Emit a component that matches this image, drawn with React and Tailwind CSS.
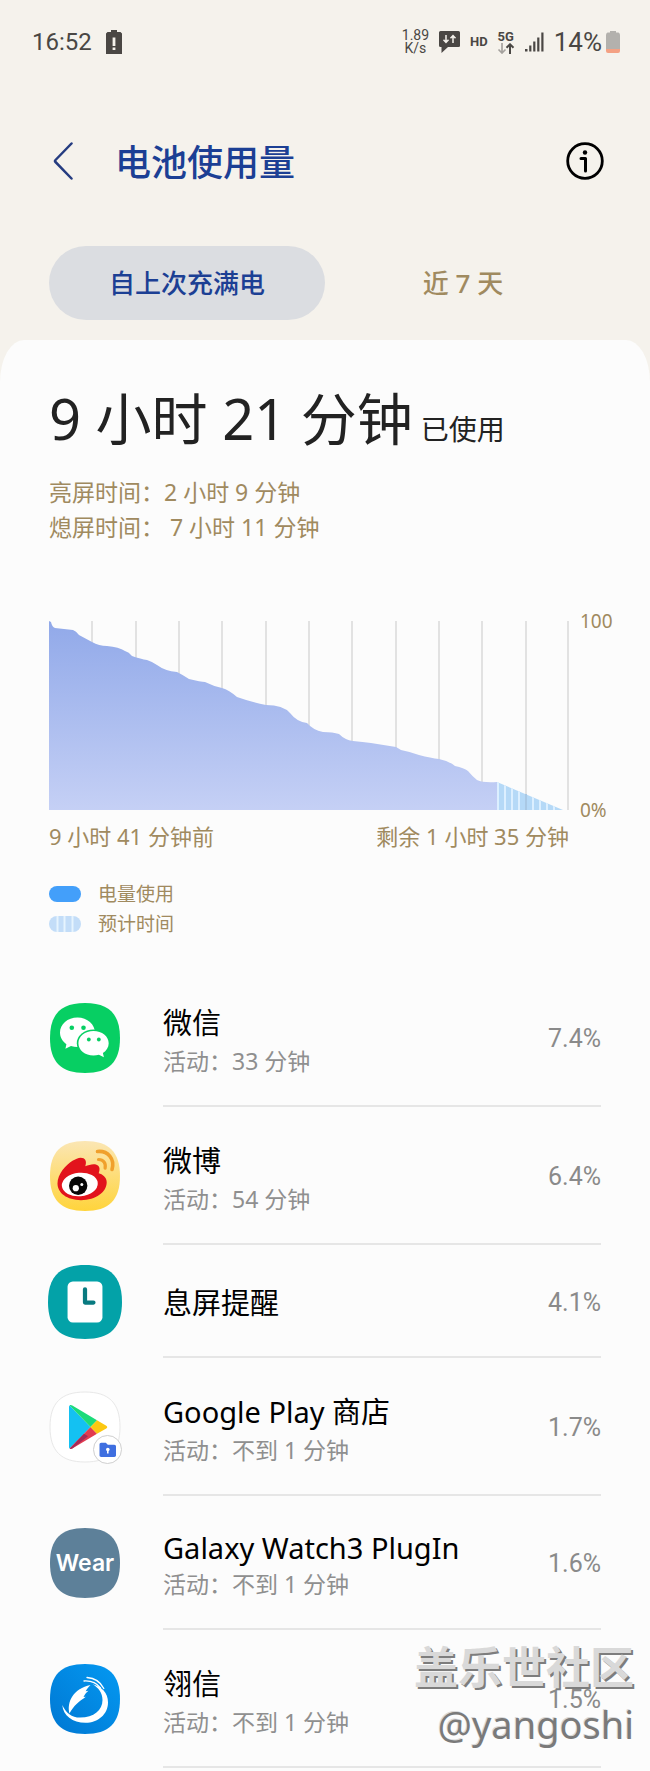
const usage = [
  { id: 'wechat', name: '微信', detail: '活动：33 分钟', percent: '7.4%' },
  { id: 'weibo', name: '微博', detail: '活动：54 分钟', percent: '6.4%' },
  { id: 'aod', name: '息屏提醒', percent: '4.1%' },
  { id: 'play', name: 'Google Play 商店', detail: '活动：不到 1 分钟', percent: '1.7%' },
  { id: 'wear', name: 'Galaxy Watch3 PlugIn', detail: '活动：不到 1 分钟', percent: '1.6%', latin: true },
  { id: 'lingxin', name: '翎信', detail: '活动：不到 1 分钟', percent: '1.5%' },
];

const SQUIRCLE = 'M35 0C59 0 70 11 70 35S59 70 35 70 0 59 0 35 11 0 35 0Z';

function WechatIcon() {
  return (
    <svg viewBox="0 0 70 70" className="size-[70px]" aria-hidden="true">
      <path d={SQUIRCLE} fill="#07cf63" />
      <path fill="#fff" d="M27.500 14.500C17.500 14.500 10 21.200 10 29.600c0 4.800 2.400 8.800 6.400 11.600l-1 4.600 5.600-2.800c2 .6 4.200 1 6.500 1 9.900 0 17.500-6.500 17.500-14.400S37.400 14.500 27.500 14.500Z" />
      <ellipse cx="43.500" cy="40.300" rx="16.700" ry="13.800" fill="#07cf63" />
      <path fill="#fff" d="M43.500 28C35 28 28.400 33.400 28.400 40.300s6.600 12.300 15.100 12.300c1.900 0 3.700-.3 5.400-.8l5 2.500-1-4.200c3.500-2.300 5.800-5.700 5.800-9.800C58.700 33.400 52 28 43.500 28Z" />
      <circle cx="21.800" cy="24.800" r="2.300" fill="#07cf63" />
      <circle cx="33.500" cy="24.800" r="2.300" fill="#07cf63" />
      <circle cx="38.800" cy="36.500" r="1.900" fill="#07cf63" />
      <circle cx="48.800" cy="36.500" r="1.900" fill="#07cf63" />
    </svg>
  );
}

function WeiboIcon() {
  return (
    <svg viewBox="0 0 70 70" className="size-[70px]" aria-hidden="true">
      <defs>
        <linearGradient id="weiboBg" x1="0" y1="0" x2="0" y2="1">
          <stop offset="0" stopColor="#fbe6b4" />
          <stop offset="1" stopColor="#ffd43b" />
        </linearGradient>
      </defs>
      <path d={SQUIRCLE} fill="url(#weiboBg)" />
      <path fill="#e2131c" d="M33.500 17.300c3 1.500 2.800 5 1.800 8 4-1.700 9.500-3.400 12.600-.8 2.400 2 1.700 5 .8 7.800 3.600 1 8 3.800 8 9C56.700 51 46 59.200 31 59.200 17 59.200 7.500 52 7.500 42.600c0-9.800 8.500-18.500 15-22.800 4-2.600 8-4.100 11-2.500Z" />
      <ellipse cx="29.800" cy="43.500" rx="18" ry="11.800" fill="#fff" transform="rotate(-5 29.800 43.500)" />
      <circle cx="28.200" cy="44.800" r="9.200" fill="#080808" />
      <circle cx="25.800" cy="47.200" r="3.100" fill="#fff" />
      <circle cx="31.800" cy="43.500" r="1.500" fill="#fff" />
      <g fill="none" stroke="#f0a02c" strokeLinecap="round">
        <path strokeWidth="3.600" d="M47.500 10.500c10.500-1 17.500 7.500 14.500 18" />
        <path strokeWidth="3.200" d="M48.500 18.500c5 0 7.600 3.600 6.600 8.600" />
      </g>
    </svg>
  );
}

function AodIcon() {
  return (
    <svg viewBox="0 0 70 70" className="size-[74px] shrink-0" aria-hidden="true">
      <path d={SQUIRCLE} fill="#03a2a8" />
      <rect x="18.500" y="15.500" width="33" height="39" rx="5" fill="#fff" />
      <path d="M35 23v12.500h8" fill="none" stroke="#087a80" strokeWidth="4" strokeLinecap="round" strokeLinejoin="round" />
    </svg>
  );
}

function PlayIcon() {
  return (
    <svg viewBox="0 0 74 74" className="size-[74px] shrink-0" aria-hidden="true">
      <path d={SQUIRCLE} transform="translate(2 2)" fill="#fff" stroke="#e8e8e8" />
      <path fill="#14c1f2" d="M21 17v40c0 .8.300 1.200.700 1.500L42.500 37 21.700 15.500c-.4.300-.7.800-.7 1.500Z" />
      <path fill="#1bdb7a" d="M21.700 15.500c.6-.6 1.600-.5 2.600.1L49 30.300 42.500 37Z" />
      <path fill="#e23b50" d="M42.500 37l6.500 6.700-24.700 14.700c-1 .6-2 .7-2.600.1Z" />
      <path fill="#a52a58" d="M21.700 58.500 36 43.700l4 2.500-15.700 12.200c-1 .6-2 .7-2.600.1Z" />
      <path fill="#fcc812" d="M49 30.300l9.300 5.400c1.300.8 1.300 2 0 2.700L49 43.700 42.500 37Z" />
      <circle cx="59.500" cy="59.500" r="14" fill="#fff" stroke="#cfcfcf" />
      <path fill="#3f6fe0" d="M51.500 54.500c0-1 .7-1.700 1.700-1.700h4.600l2 2h6.500c1 0 1.700.7 1.700 1.700v8.700c0 1-.7 1.700-1.700 1.700H53.200c-1 0-1.700-.7-1.700-1.700Z" />
      <circle cx="59.800" cy="59.500" r="1.800" fill="#fff" />
      <path d="M59.800 60v3.600" stroke="#fff" strokeWidth="1.600" />
    </svg>
  );
}

function WearIcon() {
  return (
    <div className="relative grid size-[70px] place-items-center">
      <svg viewBox="0 0 70 70" className="absolute inset-0 size-full" aria-hidden="true">
        <path d={SQUIRCLE} fill="#5d8099" />
      </svg>
      <span className="relative font-['Inter',sans-serif] text-[23px] leading-[24px] font-semibold text-white">Wear</span>
    </div>
  );
}

function LingxinIcon() {
  return (
    <svg viewBox="0 0 70 70" className="size-[70px]" aria-hidden="true">
      <defs>
        <linearGradient id="lingxinBg" x1="0" y1="1" x2="1" y2="0">
          <stop offset="0" stopColor="#0077d2" />
          <stop offset="1" stopColor="#0499f2" />
        </linearGradient>
      </defs>
      <path d={SQUIRCLE} fill="url(#lingxinBg)" />
      <path fill="#fff" d="M12.300 41c3.500 8 9.500 12.600 17.700 12.600C44 53.600 52.500 46 52.500 36c0-7-4-12.500-10-15.800C51.500 22.500 58 28.500 58 38.500c0 11.800-10 20.300-22.500 20.300C22.500 58.800 13 51.500 12.300 41Z" />
      <path fill="#fff" d="M19.500 49.500c-3-11.500 4-25 21-28.500-2 2.200-3.500 4-4.800 6.200l2.800-.5c-2.500 2-4 4-5 6.300l2.300-.3c-6 4.300-12.300 8.800-16.300 16.800Z" />
      <path fill="none" stroke="#fff" strokeWidth="1.300" strokeLinecap="round" d="M37 13.500c8 .5 13.500 4.500 16.800 11M34 17c7-.5 13 2.500 16.500 7" />
    </svg>
  );
}

const icons = { wechat: WechatIcon, weibo: WeiboIcon, aod: AodIcon, play: PlayIcon, wear: WearIcon, lingxin: LingxinIcon };

function StatusBar() {
  return (
    <div className="flex items-center justify-between pt-[26px] pr-[30px] pl-8 font-['Roboto','Noto_Sans_CJK_SC',sans-serif] leading-[32px] text-[#4a4744]">
      <div className="flex items-center gap-[14px]">
        <span className="text-[24px]">16:52</span>
        <svg viewBox="0 0 16 24" className="h-6 w-4" aria-hidden="true">
          <path fill="#4a4744" d="M5 0h6v2h3.500L16 3.500V24H0V3.500L1.500 2H5Z" />
          <path fill="#f5f2ec" d="M6.600 7.500h2.800v8.500H6.600ZM6.600 17.500h2.800V20H6.600Z" />
        </svg>
      </div>
      <div className="flex items-center">
        <div className="text-center text-[14px] leading-[13px]">
          <div>1.89</div>
          <div>K/s</div>
        </div>
        <svg viewBox="0 0 21 22" className="ml-[10px] h-[22px] w-[21px]" aria-hidden="true">
          <path fill="#4a4744" d="M1.500 0h18Q21 0 21 1.500v13.500Q21 16 19.500 16H9l-6.500 6V16h-1Q0 16 0 14.500v-13Q0 0 1.500 0Z" />
          <path d="M7 4v7M4.500 8.800 7 11.400l2.500-2.600M14 12V5M11.500 7.200 14 4.600l2.500 2.600" fill="none" stroke="#f5f2ec" strokeWidth="1.500" />
        </svg>
        <span className="ml-[10px] text-[13px] font-bold">HD</span>
        <div className="ml-[9px] flex w-[18px] flex-col items-center">
          <span className="text-[13px] leading-[13px] font-bold">5G</span>
          <svg viewBox="0 0 18 11" className="h-[11px] w-[18px]" aria-hidden="true">
            <path d="M5 0v10M1.500 6.500 5 10l3.500-3.500" fill="none" stroke="#a5a29e" strokeWidth="1.700" />
            <path d="M13 11V1.500M9.500 4.800 13 1.300l3.500 3.500" fill="none" stroke="#4a4744" strokeWidth="2" />
          </svg>
        </div>
        <svg viewBox="0 0 19 20" className="ml-[10px] h-5 w-[19px] fill-[#4a4744]" aria-hidden="true">
          <rect x="0" y="17" width="2.500" height="2.500" />
          <rect x="4.200" y="13.500" width="2.200" height="6" />
          <rect x="8.200" y="9.500" width="2.200" height="10" />
          <rect x="12.200" y="5.500" width="2.200" height="14" />
          <rect x="16.300" y="0.500" width="2.200" height="19" />
        </svg>
        <span className="ml-[10px] text-[26px]">14%</span>
        <svg viewBox="0 0 14 22" className="ml-1 h-[22px] w-[14px]" aria-hidden="true">
          <path fill="#b3b1ad" d="M4 0h6v1.500h2.500Q14 2 14 4v14H0V4Q0 2 1.500 1.500H4Z" />
          <path fill="#f4a183" d="M0 18h14v2q0 2-2 2H2q-2 0-2-2Z" />
        </svg>
      </div>
    </div>
  );
}

function BatteryChart() {
  const lines = [43, 87, 130, 173, 217, 260, 303, 347, 390, 433, 477, 519];
  const stripes = [448, 455, 462, 469, 476, 483, 490, 497, 504];
  return (
    <div className="flex gap-[11px] text-[19px] leading-[26px]">
      <div className="min-w-0 flex-1 py-[13px]">
        <svg viewBox="0 0 520 189" preserveAspectRatio="none" className="h-[189px] w-full" role="img" aria-label="电量使用">
          <defs>
            <linearGradient id="level" x1="0" y1="0" x2="0" y2="1">
              <stop offset="0" stopColor="#91a9e9" />
              <stop offset="1" stopColor="#c5d0f5" />
            </linearGradient>
          </defs>
          {lines.map((x) => (
            <rect key={x} x={x - 1} y="0" width="2" height="189" fill="#e2e2e2" />
          ))}
          <path
            fill="url(#level)"
            d="M0 0 L2 1Q3 6 6 7L24 9Q27 10 30 14L43 21Q50 25 58 25Q70 26 76 30Q80 31 83 35Q92 38 98 39Q104 41 108 44Q116 50 128 51Q134 54 140 58Q152 61 156 61Q164 65 173 67Q180 69 188 76Q202 81 217 84Q234 84 241 92Q248 101 258 102Q264 109 274 111Q284 111 290 113Q296 119 304 120Q314 121 322 122L347 126L352 129Q362 131 370 134Q382 137 390 138Q400 140 406 145Q415 147 419 150Q424 156 428 159Q434 162 448 161V189H0Z"
          />
          <path fill="#b5d9f7" d="M448 161 514 189H448Z" />
          <g fill="#dcefff">
            {stripes.map((x) => (
              <path key={x} d={`M${x} ${161 + (x - 448) * 0.424}L${x + 2} ${161 + (x - 446) * 0.424}V189H${x}Z`} />
            ))}
          </g>
          <rect x="476" y="173" width="2" height="16" fill="#a9c8e4" />
        </svg>
        <div className="flex justify-between pt-[11px] text-[22px] leading-[30px]">
          <span>9 小时 41 分钟前</span>
          <span>剩余 1 小时 35 分钟</span>
        </div>
      </div>
      <div className="flex h-[215px] w-[36px] flex-col justify-between">
        <span>100</span>
        <span>0%</span>
      </div>
    </div>
  );
}

function UsageRow({ item }) {
  const Icon = icons[item.id];
  return (
    <li className="flex gap-[42px]">
      <div className="flex w-[72px] shrink-0 items-center justify-center">
        <Icon />
      </div>
      <div className="flex min-h-[113px] min-w-0 flex-1 items-center justify-between border-b-2 border-[#e6e6e6]">
        <div className={item.detail ? 'pt-[34px] pb-[26px]' : 'pt-1'}>
          <h2 className={item.latin ? 'text-[29px] leading-[36px] text-black' : 'text-[29px] leading-[40px] text-black'}>{item.name}</h2>
          {item.detail && <p className="text-[23px] leading-[36px] text-[#8f8f8f]">{item.detail}</p>}
        </div>
        <span className="pt-1 font-['Roboto',sans-serif] text-[25px] leading-[32px] text-[#8a8a8a]">{item.percent}</span>
      </div>
    </li>
  );
}

export default function App() {
  return (
    <div className="relative bg-[#f5f2ec] font-['Noto_Sans','Noto_Sans_CJK_SC',sans-serif] text-[#a08a5f]">
      <StatusBar />
      <header className="flex items-center pt-[76px] pr-[46px] pl-[49px]">
        <button type="button" aria-label="返回" className="flex h-[54px] w-[66px] items-center pl-1">
          <svg viewBox="0 0 20 38" className="h-[38px] w-5" aria-hidden="true">
            <path d="M18.500 1.500 2.500 18q-1 1 0 2l16 16.500" fill="none" stroke="#253c80" strokeWidth="2.500" strokeLinecap="round" />
          </svg>
        </button>
        <h1 className="flex-1 pt-1 text-[36px] leading-[50px] font-medium text-[#1c3f94]">电池使用量</h1>
        <button type="button" aria-label="信息">
          <svg viewBox="0 0 38 38" className="size-[38px]" aria-hidden="true">
            <circle cx="19" cy="19" r="17.300" fill="none" stroke="#000" strokeWidth="2.800" />
            <circle cx="19" cy="10.500" r="2.200" />
            <path d="M15 16.500h4.500V29" fill="none" stroke="#000" strokeWidth="3" strokeLinecap="round" strokeLinejoin="round" />
          </svg>
        </button>
      </header>
      <nav className="grid grid-cols-2 px-[49px] pt-[58px] pb-5 text-[26px] leading-[36px] font-medium">
        <button type="button" className="h-[74px] rounded-full bg-[#dbdde1] text-[#1c3f94]">自上次充满电</button>
        <button type="button" className="h-[74px] rounded-full">近 7 天</button>
      </nav>
      <main className="rounded-t-[24px_42px] bg-[#fcfcfc] px-[49px] pt-[40px] pb-[5px]">
        <p className="leading-[76px] text-[#222]">
          <span className="text-[56px]">9 小时 21 分钟</span>
          <span className="ml-2 text-[28px]">已使用</span>
        </p>
        <div className="pt-[3px] pb-[63px] text-[23px] leading-[35px]">
          <p>亮屏时间：2 小时 9 分钟</p>
          <p>熄屏时间： 7 小时 11 分钟</p>
        </div>
        <div className="-mr-[15px]">
          <BatteryChart />
        </div>
        <ul className="pt-[15px] pb-[30px] text-[19px] leading-[30px]">
          <li className="flex items-center gap-[17px]">
            <span className="h-4 w-8 rounded-full bg-[#439ffa]" />
            电量使用
          </li>
          <li className="flex items-center gap-[17px]">
            <svg viewBox="0 0 32 16" className="h-4 w-8" aria-hidden="true">
              <rect width="32" height="16" rx="8" fill="#c3ddf8" />
              <path d="M8.500 0v16M15.500 0v16M23.500 0v16" stroke="#e6f4fe" strokeWidth="2" />
            </svg>
            预计时间
          </li>
        </ul>
        <ul>
          {usage.map((item) => (
            <UsageRow key={item.id} item={item} />
          ))}
        </ul>
      </main>
      <div className="pointer-events-none absolute right-4 bottom-[22px] text-right">
        <p className="text-[44px] leading-[60px] font-bold text-[#d9d9d9] [text-shadow:2px_2px_0_#7d7d7d]">盖乐世社区</p>
        <p className="text-[38px] leading-[54px] text-[#7a7a7a] [text-shadow:-1px_-1px_0_#d9d9d9]">@yangoshi</p>
      </div>
    </div>
  );
}
